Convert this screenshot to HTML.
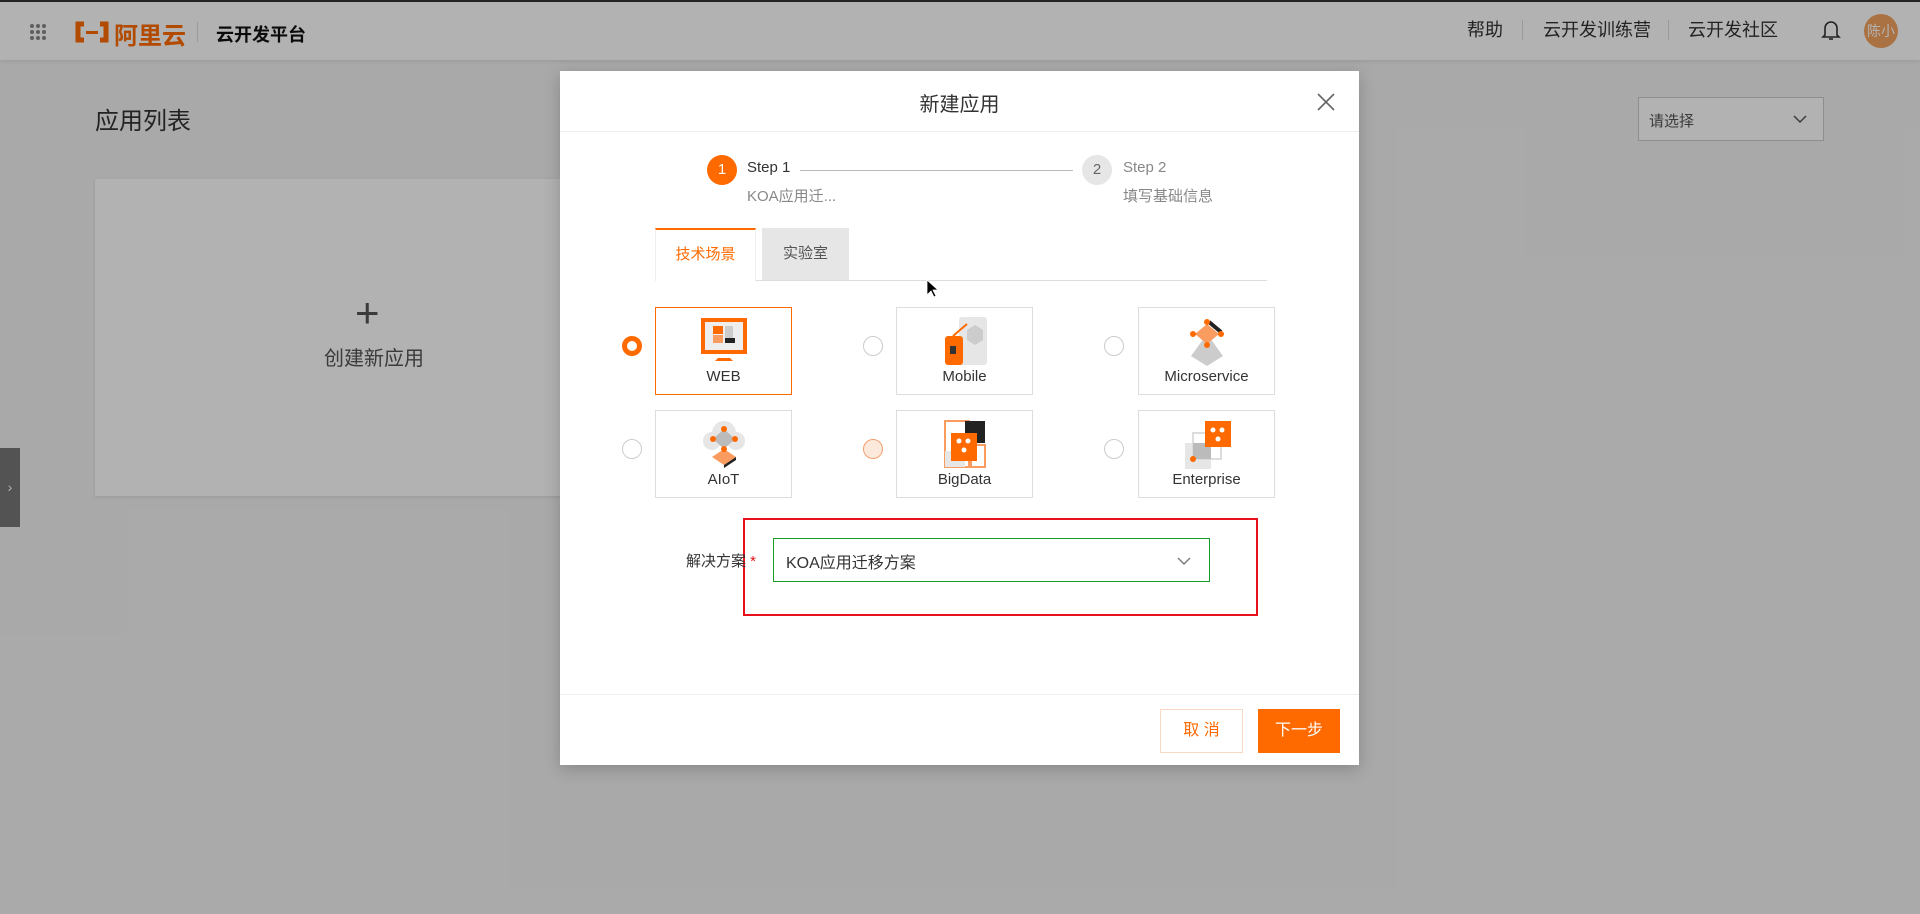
<!DOCTYPE html>
<html><head><meta charset="utf-8"><style>
*{margin:0;padding:0;box-sizing:border-box}
body{width:1920px;height:914px;overflow:hidden;background:#f3f3f3;font-family:"Liberation Sans","Noto Sans CJK SC",sans-serif;position:relative;color:#333}
.abs{position:absolute}
.hdr{left:0;top:0;width:1920px;height:60px;background:#fff;border-top:2px solid #333;box-shadow:0 2px 4px rgba(0,0,0,.08)}
.overlay{left:0;top:0;width:1920px;height:914px;background:rgba(0,0,0,.3)}
.modal{left:560px;top:71px;width:799px;height:694px;background:#fff;box-shadow:0 4px 16px rgba(0,0,0,.2)}
.card{border:1px solid #ddd;background:#fff;width:137px;height:88px;text-align:center;font-size:15px;color:#333}
.card svg{display:block;margin:8px auto 2px}
.radio{width:20px;height:20px;border-radius:50%;border:1px solid #ccc;background:#fff}
</style></head><body>
<div class="abs hdr">
  <svg class="abs" style="left:29px;top:21px" width="18" height="18"><g fill="#888"><circle cx="3" cy="3" r="2"/><circle cx="9" cy="3" r="2"/><circle cx="15" cy="3" r="2"/><circle cx="3" cy="9" r="2"/><circle cx="9" cy="9" r="2"/><circle cx="15" cy="9" r="2"/><circle cx="3" cy="15" r="2"/><circle cx="9" cy="15" r="2"/><circle cx="15" cy="15" r="2"/></g></svg>
  <svg class="abs" style="left:74px;top:19px" width="36" height="22"><path d="M10 3H4v16h6M26 3h6v16h-6" stroke="#ff6a00" stroke-width="5" fill="none"/><rect x="12" y="10" width="12" height="3" fill="#ff6a00"/></svg>
  <div class="abs" style="left:114px;top:14px;font-size:24px;color:#ff6a00;font-weight:bold">阿里云</div>
  <div class="abs" style="left:197px;top:20px;width:1px;height:20px;background:#ddd"></div>
  <div class="abs" style="left:216px;top:19px;font-size:18px;font-weight:bold;color:#111">云开发平台</div>
  <div class="abs" style="left:1467px;top:14px;font-size:18px;color:#333">帮助</div>
  <div class="abs" style="left:1522px;top:18px;width:1px;height:20px;background:#ddd"></div>
  <div class="abs" style="left:1543px;top:14px;font-size:18px;color:#333">云开发训练营</div>
  <div class="abs" style="left:1668px;top:18px;width:1px;height:20px;background:#ddd"></div>
  <div class="abs" style="left:1688px;top:14px;font-size:18px;color:#333">云开发社区</div>
  <svg class="abs" style="left:1821px;top:17px" width="20" height="22"><path d="M4 16V9a6 6 0 0 1 12 0v7l2 2H2z" fill="none" stroke="#333" stroke-width="1.6"/><path d="M8 20h4" stroke="#333" stroke-width="1.6"/></svg>
  <div class="abs" style="left:1864px;top:12px;width:34px;height:34px;border-radius:50%;background:#f4a460;color:#fff;font-size:14px;line-height:34px;text-align:center">陈小</div>
</div>
<div class="abs" style="left:95px;top:106px;font-size:24px;color:#333;margin-top:-5px">应用列表</div>
<div class="abs" style="left:95px;top:179px;width:470px;height:317px;background:#fff;box-shadow:0 1px 4px rgba(0,0,0,.1)"></div>
<div class="abs" style="left:355px;top:292px;font-size:42px;font-weight:200;color:#555;line-height:42px">+</div>
<div class="abs" style="left:324px;top:342px;font-size:20px;color:#555">创建新应用</div>
<div class="abs" style="left:1638px;top:97px;width:186px;height:44px;background:#fff;border:1px solid #ccc;font-size:15px;padding:12px 10px;color:#555">请选择<svg style="position:absolute;right:16px;top:16px" width="14" height="10"><path d="M1 2l6 6 6-6" fill="none" stroke="#555" stroke-width="1.5"/></svg></div>
<div class="abs" style="left:0;top:448px;width:20px;height:79px;background:#777;color:#fff;font-size:14px;line-height:79px;text-align:center">›</div>
<div class="abs overlay"></div>

<div class="abs modal">
  <div class="abs" style="left:0;top:17px;width:799px;text-align:center;font-size:20px;color:#333">新建应用</div>
  <svg class="abs" style="left:757px;top:22px" width="18" height="18"><path d="M1 1l16 16M17 1L1 17" stroke="#666" stroke-width="1.6"/></svg>
  <div class="abs" style="left:0;top:60px;width:799px;height:1px;background:#eee"></div>
  <div class="abs" style="left:147px;top:84px;width:30px;height:30px;border-radius:50%;background:#ff6a00;color:#fff;font-size:15px;line-height:30px;text-align:center">1</div>
  <div class="abs" style="left:187px;top:88px;font-size:15px;color:#333">Step 1</div>
  <div class="abs" style="left:187px;top:114px;font-size:15px;color:#888">KOA应用迁...</div>
  <div class="abs" style="left:240px;top:99px;width:273px;height:1px;background:#bbb"></div>
  <div class="abs" style="left:522px;top:84px;width:30px;height:30px;border-radius:50%;background:#e6e6e6;color:#666;font-size:15px;line-height:30px;text-align:center">2</div>
  <div class="abs" style="left:563px;top:88px;font-size:15px;color:#888">Step 2</div>
  <div class="abs" style="left:563px;top:114px;font-size:15px;color:#888">填写基础信息</div>
  <div class="abs" style="left:95px;top:209px;width:612px;height:1px;background:#ddd"></div>
  <div class="abs" style="left:95px;top:157px;width:101px;height:53px;background:#fff;border-top:2px solid #ff6a00;border-left:1px solid #eee;border-right:1px solid #eee;color:#ff6a00;font-size:15px;text-align:center;line-height:50px">技术场景</div>
  <div class="abs" style="left:202px;top:157px;width:87px;height:52px;background:#e6e6e6;color:#555;font-size:15px;text-align:center;line-height:52px">实验室</div>

  <div class="abs radio" style="left:62px;top:265px;border:5px solid #ff6a00"></div>
  <div class="abs radio" style="left:303px;top:265px"></div>
  <div class="abs radio" style="left:544px;top:265px"></div>
  <div class="abs radio" style="left:62px;top:368px"></div>
  <div class="abs radio" style="left:303px;top:368px;border-color:#f5a070;background:#fde8dc"></div>
  <div class="abs radio" style="left:544px;top:368px"></div>

  <div class="abs card" style="left:95px;top:236px;border-color:#ff6a00"><svg width="52" height="50"><rect x="3" y="2" width="46" height="36" fill="#ff6a00"/><rect x="7" y="6" width="38" height="28" fill="#eee"/><rect x="15" y="10" width="10" height="8" fill="#ff6a00"/><rect x="15" y="19" width="10" height="8" fill="#fa9c60"/><rect x="27" y="10" width="8" height="17" fill="#ccc"/><rect x="27" y="22" width="10" height="5" fill="#222"/><path d="M20 42h12l3 3H17z" fill="#ff6a00"/></svg>WEB</div>
  <div class="abs card" style="left:336px;top:236px"><svg width="52" height="50"><rect x="20" y="1" width="28" height="48" rx="3" fill="#e6e6e6"/><rect x="6" y="20" width="18" height="29" rx="3" fill="#ff6a00"/><path d="M28 14l8-5 8 5v10l-8 5-8-5z" fill="#ccc"/><path d="M14 20l14-12" stroke="#ff6a00" stroke-width="2"/><rect x="11" y="30" width="6" height="8" fill="#333"/></svg>Mobile</div>
  <div class="abs card" style="left:578px;top:236px"><svg width="52" height="50"><path d="M26 18L10 40l16 10 16-10z" fill="#ccc"/><path d="M26 8L14 18l12 10 12-10z" fill="#fa9c60"/><path d="M28 6l12 10" stroke="#222" stroke-width="4"/><g fill="#ff6a00"><circle cx="26" cy="6" r="3"/><circle cx="12" cy="18" r="3"/><circle cx="40" cy="18" r="3"/><circle cx="26" cy="29" r="3"/></g></svg>Microservice</div>
  <div class="abs card" style="left:95px;top:339px"><svg width="52" height="50"><circle cx="26" cy="14" r="12" fill="#e6e6e6"/><circle cx="14" cy="22" r="9" fill="#e6e6e6"/><circle cx="38" cy="22" r="9" fill="#e6e6e6"/><path d="M26 30l-12 8 12 8 12-8z" fill="#fa9c60"/><path d="M38 38l-12 8v3l12-8z" fill="#222"/><path d="M26 10l-11 10 11 10 11-10z" fill="#bbb"/><g fill="#ff6a00"><circle cx="26" cy="10" r="3"/><circle cx="15" cy="20" r="3"/><circle cx="37" cy="20" r="3"/><circle cx="26" cy="30" r="3"/></g></svg>AIoT</div>
  <div class="abs card" style="left:336px;top:339px"><svg width="52" height="50"><rect x="6" y="2" width="24" height="46" fill="none" stroke="#fa9c60" stroke-width="2"/><rect x="26" y="2" width="20" height="22" fill="#222"/><rect x="6" y="32" width="20" height="16" fill="#e6e6e6"/><rect x="32" y="26" width="14" height="22" fill="none" stroke="#fa9c60" stroke-width="2"/><rect x="12" y="14" width="26" height="28" fill="#ff6a00"/><g fill="#fff"><circle cx="20" cy="22" r="2.5"/><circle cx="29" cy="22" r="2.5"/><circle cx="25" cy="31" r="2.5"/></g></svg>BigData</div>
  <div class="abs card" style="left:578px;top:339px"><svg width="52" height="50"><rect x="4" y="24" width="26" height="26" fill="#e6e6e6"/><rect x="12" y="14" width="28" height="26" fill="none" stroke="#ddd" stroke-width="2"/><rect x="12" y="24" width="18" height="16" fill="#bbb"/><rect x="24" y="2" width="26" height="26" fill="#ff6a00"/><g fill="#fff"><circle cx="32" cy="11" r="2.5"/><circle cx="41" cy="11" r="2.5"/><circle cx="37" cy="20" r="2.5"/></g><circle cx="12" cy="40" r="3" fill="#ff6a00"/></svg>Enterprise</div>

  <div class="abs" style="left:183px;top:447px;width:515px;height:98px;border:2px solid #e8101a"></div>
  <div class="abs" style="left:126px;top:479px;font-size:15px;color:#333">解决方案 <span style="color:#e8101a">*</span></div>
  <div class="abs" style="left:213px;top:467px;width:437px;height:44px;border:1px solid #1a9e2a;font-size:16px;padding:10px 12px;color:#333">KOA应用迁移方案<svg style="position:absolute;right:18px;top:17px" width="14" height="10"><path d="M1 2l6 6 6-6" fill="none" stroke="#777" stroke-width="1.4"/></svg></div>

  <div class="abs" style="left:0;top:623px;width:799px;height:1px;background:#eee"></div>
  <div class="abs" style="left:600px;top:638px;width:83px;height:44px;border:1px solid #fbd8c4;color:#ff6a00;font-size:16px;text-align:center;line-height:42px">取 消</div>
  <div class="abs" style="left:698px;top:638px;width:82px;height:44px;background:#ff6a00;color:#fff;font-size:16px;text-align:center;line-height:44px">下一步</div>
</div>
<svg class="abs" style="left:926px;top:279px" width="12" height="20"><path d="M1 1v15l4-4 3 6 2-1-3-6h5z" fill="#000" stroke="#fff" stroke-width=".8"/></svg>
</body></html>
